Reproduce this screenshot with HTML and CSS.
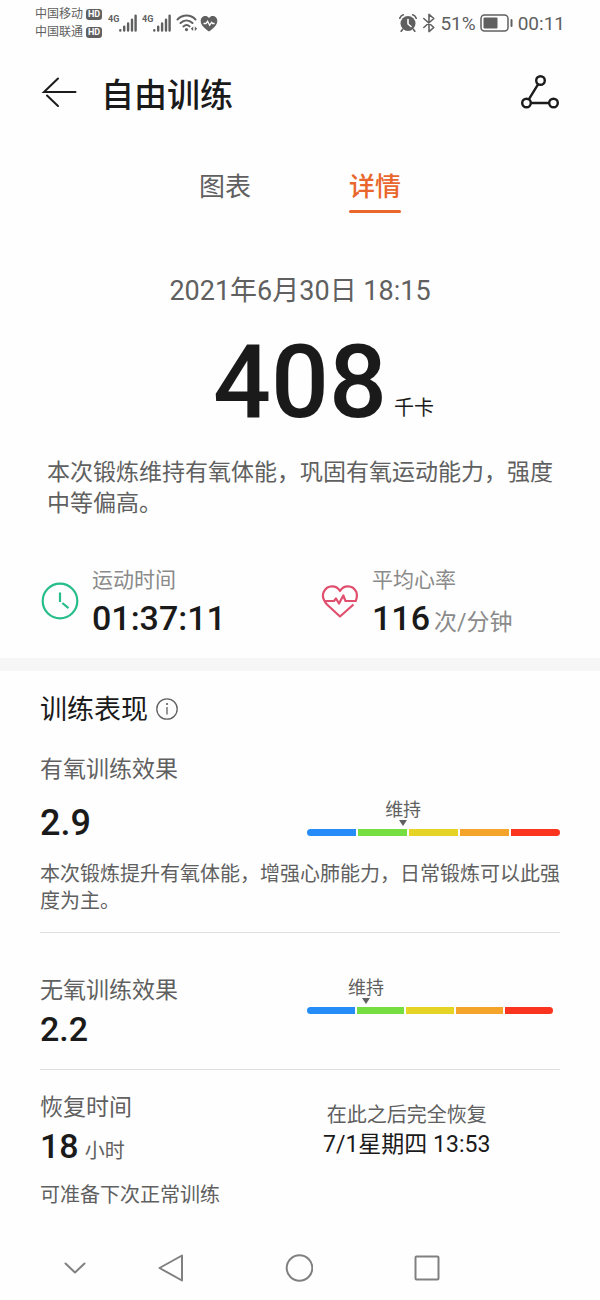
FILE: index.html
```html
<!DOCTYPE html>
<html lang="zh-CN">
<head>
    <meta charset="UTF-8">
    <meta name="viewport" content="width=device-width, initial-scale=1.0">
    <title>自由训练</title>
    <link rel="stylesheet" href="styles.css">
</head>
<body>
    <div class="status-bar">
        <div class="carriers">
            <div class="carrier">中国移动 <span class="hd">HD</span></div>
            <div class="carrier">中国联通 <span class="hd">HD</span></div>
        </div>
        <div class="signals">
            <span class="network">4G</span>
            <svg class="signal" width="18" height="18" viewBox="0 0 18 18" stroke="#606060" stroke-width="2.4" stroke-linecap="round">
                <path d="M1.3 16.6v-.5M5.2 16.6v-4M9.1 16.6V9.4M13 16.6V5.8M16.6 16.6V1.6"/>
            </svg>
            <span class="network">4G</span>
            <svg class="signal" width="18" height="18" viewBox="0 0 18 18" stroke="#606060" stroke-width="2.4" stroke-linecap="round">
                <path d="M1.3 16.6v-.5M5.2 16.6v-4M9.1 16.6V9.4M13 16.6V5.8M16.6 16.6V1.6"/>
            </svg>
            <svg class="wifi" width="22" height="18" viewBox="0 0 22 18" fill="none" stroke="#606060" stroke-width="2" stroke-linecap="round">
                <path d="M1.5 5.5c5.2-5.2 13-5.2 18 0M4.5 9c3.6-3.4 8.4-3.4 12 0M7.4 12.4c2-1.8 4.4-1.8 6.2 0"/>
                <circle cx="10.5" cy="15.6" r="1.6" fill="#606060" stroke="none"/>
                <path d="M17.2 12.5V17l-2.4-2.2zM18.8 12.5V17l2.4-2.2z" fill="#606060" stroke="none"/>
            </svg>
            <svg width="18" height="17" viewBox="0 0 18 17">
                <path d="M9 16.5C5 13.6.7 10.2.7 5.7.7 1 6.5-.8 9 3c2.5-3.8 8.3-2 8.3 2.7 0 4.5-4.3 7.9-8.3 10.8z" fill="#606060"/>
                <path d="M3.5 8.5H6l1.6-2.2 2 4 2-3 1 1.2h2" fill="none" stroke="#fff" stroke-width="1.3"/>
            </svg>
        </div>
        <div class="system">
            <svg width="20" height="20" viewBox="0 0 20 20" fill="none" stroke="#606060" stroke-linecap="round">
                <circle cx="10" cy="10.5" r="7.5" fill="#606060" stroke="none"/>
                <path d="M1.8 5.2C2.4 3.5 3.5 2.4 5.3 1.8M18.2 5.2c-.6-1.7-1.7-2.8-3.5-3.4M4.5 16.5l-1.3 1.7M15.5 16.5l1.3 1.7" stroke-width="1.7"/>
                <path d="M10 6.5V11l3 2.5" stroke="#fff" stroke-width="1.6"/>
            </svg>
            <svg width="14" height="20" viewBox="0 0 14 20" fill="none" stroke="#606060" stroke-width="1.6" stroke-linejoin="round" stroke-linecap="round">
                <path d="M1.8 5.5l10 9L7 18.6V1.4l4.8 4.1-10 9"/>
            </svg>
            <span>51%</span>
            <svg width="34" height="18" viewBox="0 0 34 18">
                <rect x="1" y="1" width="27" height="16" rx="3.5" fill="none" stroke="#606060" stroke-width="1.5"/>
                <rect x="3.5" y="3.5" width="14" height="11" rx="1" fill="#606060"/>
                <rect x="30.5" y="5" width="2" height="8" rx="1" fill="#606060"/>
            </svg>
            <span>00:11</span>
        </div>
    </div>

    <header class="header">
        <button type="button" aria-label="返回">
            <svg width="38" height="36" viewBox="0 0 38 36" fill="none" stroke="#1c1c1c" stroke-width="2" stroke-linecap="round">
                <path d="M18 3.5L4 17h31.5M18 31L7 20.5"/>
            </svg>
        </button>
        <h1>自由训练</h1>
        <button type="button" aria-label="轨迹">
            <svg width="40" height="36" viewBox="0 0 40 36" fill="none" stroke="#1c1c1c" stroke-width="2.4">
                <circle cx="20.5" cy="5.5" r="4.3"/>
                <circle cx="6.5" cy="28" r="4.3"/>
                <circle cx="33.5" cy="28" r="4.3"/>
                <path d="M18.2 9.2L8.800 24.3M10.8 28H29.2"/>
            </svg>
        </button>
    </header>

    <nav class="tabs">
        <button class="tab" type="button">图表</button>
        <button class="tab active" type="button">详情</button>
    </nav>

    <main>
        <section class="summary">
            <p class="date">2021年6月30日 18:15</p>
            <div class="calories">
                <span class="calories-value">408</span>
                <span class="calories-unit">千卡</span>
            </div>
            <p class="comment">本次锻炼维持有氧体能，巩固有氧运动能力，强度中等偏高。</p>
            <div class="stats">
                <div class="stat">
                    <svg width="40" height="40" viewBox="0 0 40 40" fill="none" stroke="#27bd8b" stroke-width="2.2">
                        <circle cx="20" cy="19" r="17.3"/>
                        <path d="M20 10.5V20M22.3 21l6.2 5.2"/>
                    </svg>
                    <div>
                        <div class="stat-label">运动时间</div>
                        <div class="value">01:37:11</div>
                    </div>
                </div>
                <div class="stat">
                    <svg width="40" height="40" viewBox="0 1 40 40" fill="none" stroke="#e0506e" stroke-width="2.2" stroke-linejoin="round">
                        <path d="M33.500 23.5L20 35.5 7 23.5C3.500 19.500 1.700 15 3.800 10.700 7.300 3.800 16.200 3.500 20 10c3.800-6.500 12.700-6.200 16.200.7 1.200 3 .9 6-.5 9.300H25.500l-2.200-5.500-4.300 8-3-5-2 2.500H5"/>
                    </svg>
                    <div>
                        <div class="stat-label">平均心率</div>
                        <div class="value">116<span class="value-unit">次/分钟</span></div>
                    </div>
                </div>
            </div>
        </section>

        <section class="performance">
            <h2>训练表现
                <svg width="24" height="24" viewBox="0 0 24 24" fill="none" stroke="#606060" stroke-width="1.3">
                    <circle cx="11" cy="11" r="10.2"/>
                    <path d="M11 9v7.5"/>
                    <circle cx="11" cy="6" r="1.1" fill="#606060" stroke="none"/>
                </svg>
            </h2>

            <div class="block">
                <h3>有氧训练效果</h3>
                <div class="columns">
                    <div class="score">2.9</div>
                    <div class="meter">
                        <div class="marker" style="margin-left: 38%">维持</div>
                        <div class="scale"><i></i><i></i><i></i><i></i><i></i></div>
                    </div>
                </div>
                <p class="note">本次锻炼提升有氧体能，增强心肺能力，日常锻炼可以此强度为主。</p>
            </div>

            <div class="block anaerobic columns">
                <div>
                    <h3>无氧训练效果</h3>
                    <div class="value">2.2</div>
                </div>
                <div class="meter short">
                    <div class="marker" style="margin-left: 24%">维持</div>
                    <div class="scale"><i></i><i></i><i></i><i></i><i></i></div>
                </div>
            </div>

            <div class="block recovery columns">
                <div>
                    <h3>恢复时间</h3>
                    <div class="value">18<span class="hours">小时</span></div>
                    <p class="ready">可准备下次正常训练</p>
                </div>
                <div class="recovered">
                    <div class="recovered-label">在此之后完全恢复</div>
                    <div class="recovered-time">7/1星期四 13:53</div>
                </div>
            </div>
        </section>
    </main>

    <nav class="system-nav">
        <button type="button" aria-label="收起">
            <svg width="28" height="28" viewBox="0 0 28 28"><path d="M4.5 9.5L14 18.5l9.5-9"/></svg>
        </button>
        <button type="button" aria-label="返回">
            <svg width="28" height="28" viewBox="0 0 28 28"><path d="M25 1.5v25L2.5 14z"/></svg>
        </button>
        <button type="button" aria-label="主页">
            <svg width="28" height="28" viewBox="0 0 28 28"><circle cx="14.5" cy="14" r="12.8"/></svg>
        </button>
        <button type="button" aria-label="最近任务">
            <svg width="28" height="28" viewBox="0 0 28 28"><rect x="2.5" y="2.5" width="23" height="23" rx="1"/></svg>
        </button>
    </nav>
</body>
</html>
```

FILE: styles.css
```css
* {
    box-sizing: border-box;
}

body {
    margin: 0;
    background-color: #fefefe;
    color: #1a1a1a;
    font-family: Roboto, "Noto Sans CJK SC", sans-serif;
}

h1,
h2,
h3,
p {
    margin: 0;
    font-weight: normal;
}

svg {
    display: block;
    flex: none;
}

button {
    padding: 0;
    border: none;
    background: none;
    font-family: inherit;
    cursor: pointer;
}

/* Status bar */
.status-bar {
    display: flex;
    align-items: center;
    height: 46px;
    padding: 0 35px;
    color: #606060;
}

.carrier {
    display: flex;
    align-items: center;
    gap: 3px;
    font-size: 12px;
    line-height: 18px;
}

.hd {
    width: 16px;
    border-radius: 3px;
    background-color: #606060;
    color: #fff;
    font-size: 9px;
    font-weight: bold;
    line-height: 11px;
    text-align: center;
}

.signals {
    display: flex;
    align-items: center;
    margin-left: 6px;
}

.network {
    align-self: flex-start;
    width: 11px;
    font-size: 9px;
    font-weight: bold;
    line-height: 10px;
}

.signal {
    margin-right: 5px;
}

.wifi {
    margin-right: 2px;
}

.system {
    display: flex;
    align-items: center;
    gap: 4px;
    margin-left: auto;
    font-size: 19px;
}

/* Header */
.header {
    display: flex;
    align-items: center;
    height: 94px;
    padding: 0 40px;
}

.header h1 {
    flex: 1;
    margin-left: 23px;
    font-size: 33px;
    font-weight: 500;
}

.tabs {
    display: flex;
    justify-content: center;
    gap: 98px;
    margin-top: 32px;
}

.tab {
    color: #606060;
    font-size: 26px;
    line-height: 30px;
    padding-bottom: 11px;
}

.tab.active {
    color: #e9662c;
    font-weight: 500;
}

.tab.active::after {
    content: "";
    display: block;
    height: 3px;
    margin: 8px 0 -11px;
    border-radius: 2px;
    background-color: #e9662c;
}

/* Summary */
.summary {
    padding: 60px 0 20px 40px;
    border-bottom: 13px solid #f6f6f6;
}

.date {
    margin-right: 40px;
    color: #606060;
    font-size: 27px;
    line-height: 36px;
    text-align: center;
}

.calories {
    display: grid;
    grid-template-columns: 1fr auto 1fr;
    align-items: end;
    margin: 23px 40px 0 0;
}

.calories-value {
    grid-column: 2;
    font-size: 102px;
    font-weight: 500;
    line-height: 100px;
}

.calories-unit {
    margin: 0 0 11px 7px;
    font-size: 20px;
    line-height: 26px;
}

.comment {
    margin: 25px 40px 0 7px;
    color: #606060;
    font-size: 23px;
    line-height: 31px;
}

.stats {
    display: grid;
    grid-template-columns: 1fr 1fr;
    margin-top: 46px;
}

.stat {
    display: flex;
    align-items: center;
    gap: 12px;
}

.stat-label {
    color: #8a8a8a;
    font-size: 21px;
    line-height: 30px;
}

.value {
    margin-top: 3px;
    font-size: 34px;
    font-weight: 500;
    line-height: 40px;
}

.value-unit {
    margin-left: 4px;
    color: #8a8a8a;
    font-size: 23px;
    font-weight: normal;
    line-height: 20px;
}

/* Training performance */
.performance {
    padding: 21px 40px 0;
}

h2 {
    display: flex;
    align-items: center;
    gap: 8px;
    font-size: 27px;
    line-height: 36px;
}

h3 {
    color: #606060;
    font-size: 23px;
    line-height: 30px;
}

.block {
    padding: 27px 0 17px;
    border-bottom: 1px solid #dedede;
}

.columns {
    display: grid;
    grid-template-columns: 1fr 253px;
}

.score {
    font-size: 36px;
    font-weight: 500;
    line-height: 46px;
}

.block > .columns {
    margin: 15px 0;
}

.meter {
    width: 100%;
}

.meter.short {
    width: 246px;
    margin-top: 2px;
}

.marker {
    width: fit-content;
    color: #606060;
    font-size: 18px;
    line-height: 20px;
    transform: translateX(-50%);
}

.marker::after {
    content: "";
    display: block;
    width: 0;
    margin: 0 auto;
    border: 4px solid transparent;
    border-top: 6px solid #606060;
    border-bottom: none;
}

.scale {
    display: grid;
    grid-template-columns: repeat(5, 1fr);
    gap: 2px;
    height: 7px;
    margin-top: 3px;
    border-radius: 4px;
    overflow: hidden;
}

.scale i:nth-child(1) { background-color: #258cf8; }
.scale i:nth-child(2) { background-color: #76de40; }
.scale i:nth-child(3) { background-color: #e5d326; }
.scale i:nth-child(4) { background-color: #f4a42a; }
.scale i:nth-child(5) { background-color: #fb3420; }

.note {
    color: #606060;
    font-size: 20px;
    line-height: 27px;
}

.anaerobic {
    padding: 43px 0 20px;
}

.recovery {
    padding: 23px 0 26px;
    border-bottom: none;
}

.hours {
    margin-left: 6px;
    color: #606060;
    font-size: 20px;
    font-weight: normal;
    line-height: 20px;
}

.ready {
    margin-top: 14px;
    color: #606060;
    font-size: 20px;
    line-height: 30px;
}

.recovered {
    width: fit-content;
    margin: 7px 0 0 16px;
    text-align: center;
    line-height: 30px;
}

.recovered-label {
    color: #606060;
    font-size: 20px;
}

.recovered-time {
    font-size: 23px;
}

/* Bottom navigation */
.system-nav {
    display: grid;
    grid-template-columns: 1fr 2fr 2fr 2fr;
    height: 64px;
    padding: 0 109px 0 43px;
}

.system-nav button {
    display: flex;
    align-items: center;
    justify-content: center;
}

.system-nav svg {
    fill: none;
    stroke: #808080;
    stroke-width: 2;
    stroke-linejoin: round;
    stroke-linecap: round;
}
```
